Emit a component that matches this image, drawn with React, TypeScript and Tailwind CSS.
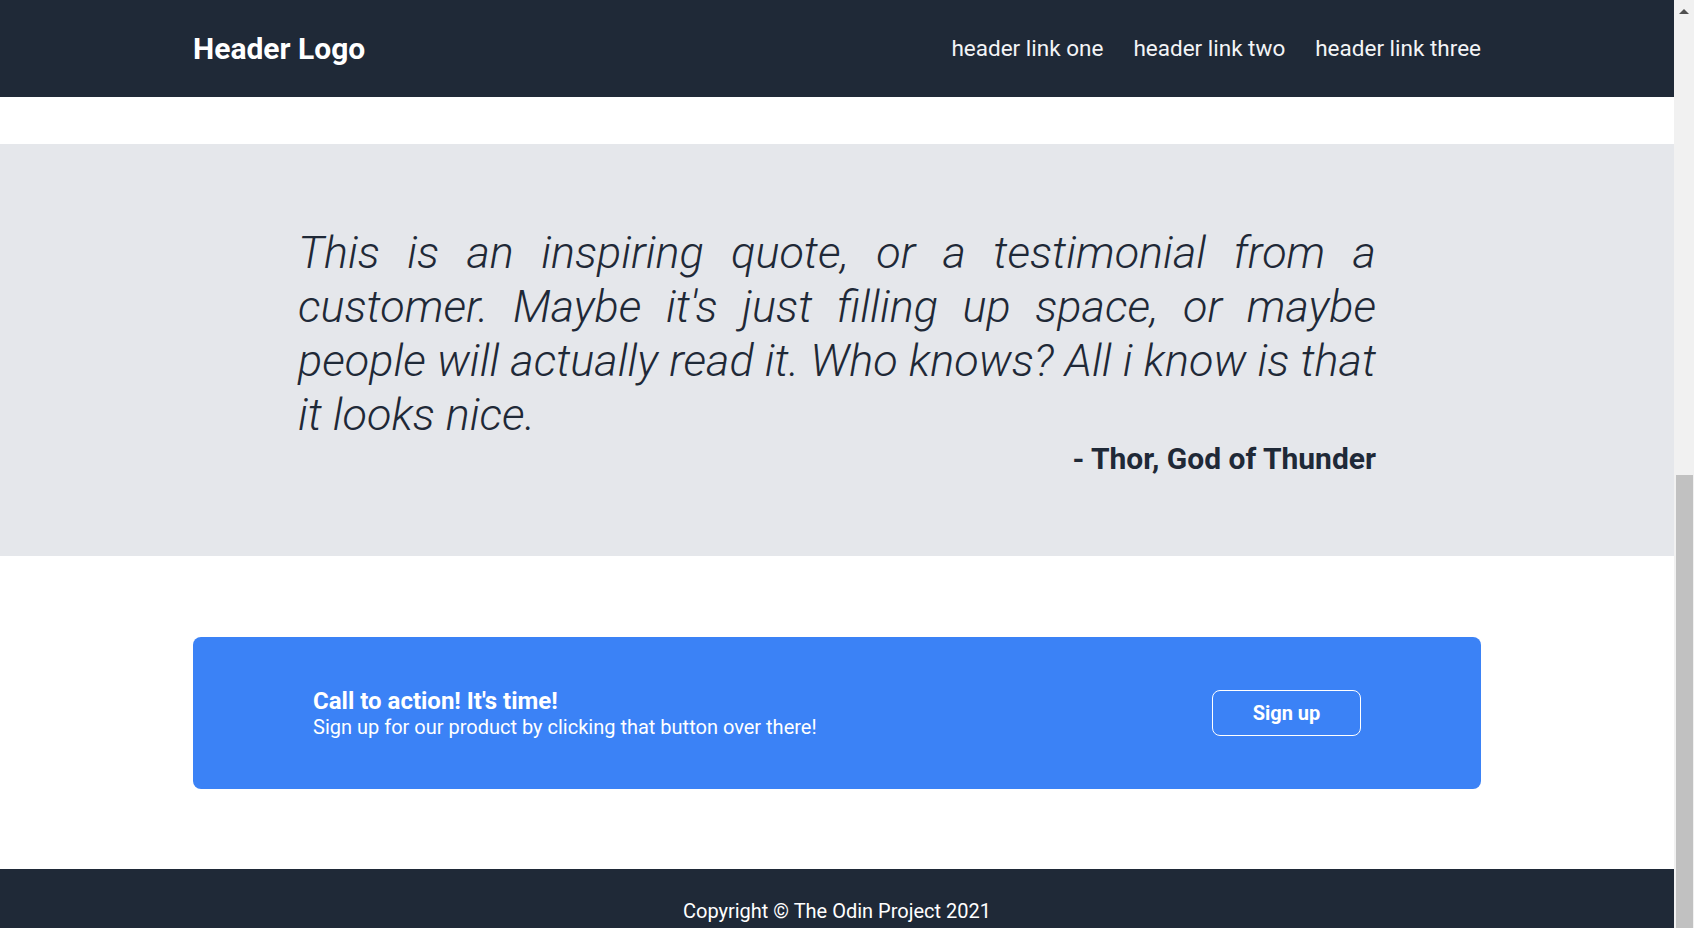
const links = ["header link one", "header link two", "header link three"];

function Header() {
  return (
    <header className="h-[97px] bg-[#1f2937] text-white">
      <div className="mx-auto flex h-full w-[1288px] items-center justify-between">
        <h1 className="text-[30px] font-bold">Header Logo</h1>
        <nav className="flex gap-[30px] text-[22.5px] text-[#f3f4f6]">
          {links.map((l) => (
            <a key={l} href="#">
              {l}
            </a>
          ))}
        </nav>
      </div>
    </header>
  );
}

function Quote() {
  return (
    <section className="h-[412px] bg-[#e5e7eb] pt-[82px] text-[#1f2937]">
      <div className="mx-auto w-[1078px]">
        <p className="text-justify text-[45px] leading-[54px] font-light italic">
          This is an inspiring quote, or a testimonial from a customer. Maybe
          it's just filling up space, or maybe people will actually read it.
          Who knows? All i know is that it looks nice.
        </p>
        <p className="text-right text-[30px] leading-[34px] font-bold">
          - Thor, God of Thunder
        </p>
      </div>
    </section>
  );
}

function CallToAction() {
  return (
    <section className="bg-white pt-[81px] pb-[80px]">
      <div className="mx-auto flex h-[152px] w-[1288px] items-center justify-between rounded-lg bg-[#3b82f6] px-[120px] text-white">
        <div>
          <h2 className="text-[24px] leading-[28px] font-bold">
            Call to action! It's time!
          </h2>
          <p className="text-[20px] leading-[24px]">
            Sign up for our product by clicking that button over there!
          </p>
        </div>
        <button className="h-[46px] w-[149px] rounded-lg border border-white text-[20px] font-bold">
          Sign up
        </button>
      </div>
    </section>
  );
}

function Scrollbar() {
  return (
    <div className="flex h-[928px] w-[20px] shrink-0 flex-col bg-[#f1f1f1]">
      <div className="flex h-[475px] justify-center pt-[9px]">
        <svg width="10" height="5" viewBox="0 0 10 5">
          <path d="M5 0 L10 5 L0 5 Z" fill="#505050" />
        </svg>
      </div>
      <div className="ml-[2px] mr-[1px] flex-1 bg-[#c1c1c1]" />
    </div>
  );
}

export default function App() {
  return (
    <div className="flex h-[928px] overflow-hidden font-['Roboto',sans-serif]">
      <main className="flex-1 overflow-hidden">
        <Header />
        <div className="h-[47px] bg-white" />
        <Quote />
        <CallToAction />
        <footer className="h-[120px] bg-[#1f2937] pt-[30px] text-center text-[20px] leading-[24px] text-white">
          Copyright © The Odin Project 2021
        </footer>
      </main>
      <Scrollbar />
    </div>
  );
}
